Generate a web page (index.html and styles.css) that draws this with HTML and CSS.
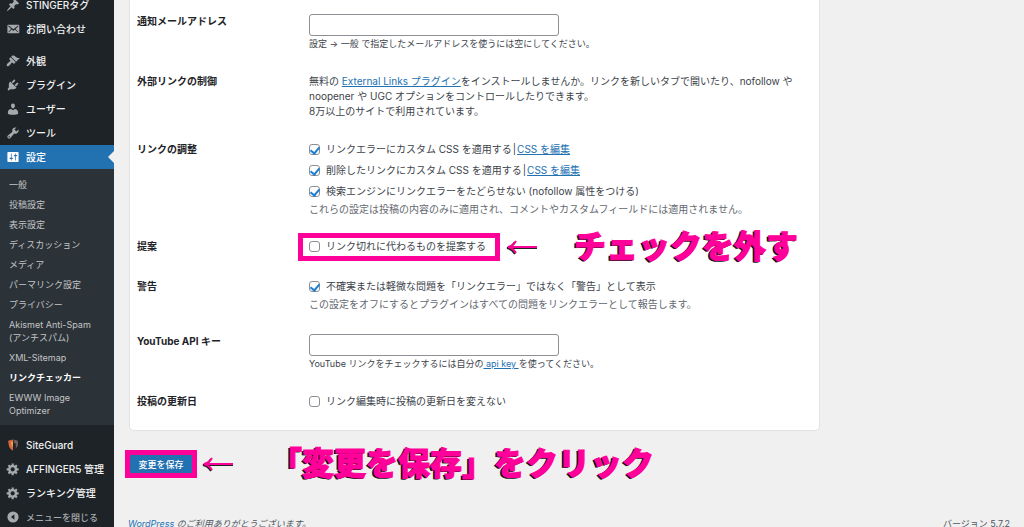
FILE: index.html
```html
<!DOCTYPE html>
<html lang="ja">
<head>
  <meta charset="UTF-8" />
  <meta name="viewport" content="width=device-width, initial-scale=1.0"/>
  <title>リンクチェッカー設定</title>
  <link rel="stylesheet" href="styles.css">
</head>
<body>

  <nav class="sidebar">
    <ul class="menu">
      <li><a href="#"><svg class="icon" viewBox="0 0 20 20"><path d="M10.44 3.02l1.82-1.82 6.36 6.35-1.83 1.82c-1.05-.68-2.48-.57-3.41.36l-.75.75c-.92.93-1.04 2.35-.35 3.41l-1.83 1.82-2.41-2.41-2.8 2.79c-.42.42-3.38 2.71-3.8 2.29s1.86-3.39 2.28-3.81l2.79-2.79L4.1 9.36l1.83-1.82c1.05.69 2.48.57 3.4-.36l.75-.75c.93-.92 1.05-2.35.36-3.41z"/></svg>STINGERタグ</a></li>
      <li><a href="#"><svg class="icon" viewBox="0 0 20 20"><path d="M19 14.5v-9c0-.83-.67-1.5-1.5-1.5H3.49c-.83 0-1.5.67-1.5 1.5v9c0 .83.67 1.5 1.5 1.5H17.5c.83 0 1.5-.67 1.5-1.5zm-1.31-9.11c.33.33.15.67-.03.84L13.6 9.95l3.9 4.06c.12.14.2.36.06.51-.13.16-.43.15-.56.05l-4.37-3.73-2.14 1.95-2.13-1.95-4.37 3.73c-.13.1-.43.11-.56-.05-.14-.15-.06-.37.06-.51l3.9-4.06-4.06-3.72c-.18-.17-.36-.51-.03-.84s.67-.17.95.07l6.24 5.04 6.25-5.04c.28-.24.62-.4.95-.07z"/></svg>お問い合わせ</a></li>
      <li class="group"><a href="#"><svg class="icon" viewBox="0 0 20 20"><path d="M14.48 11.06L7.41 3.99l1.5-1.5c.5-.56 2.3-.47 3.51.32 1.21.8 1.43 1.28 2.91 2.1 1.18.64 2.45 1.26 4.45.85zm-.71.71L6.7 4.7 4.93 6.47c-.39.39-.39 1.02 0 1.41l1.06 1.06c.39.39.39 1.03 0 1.42-.6.6-1.43 1.11-2.21 1.69-.35.26-.7.53-1.01.84C1.43 14.23.4 16.08 1.4 17.07c.99 1 2.84-.03 4.18-1.36.31-.31.58-.66.85-1.02.57-.78 1.08-1.61 1.69-2.21.39-.39 1.02-.39 1.41 0l1.06 1.06c.39.39 1.02.39 1.41 0z"/></svg>外観</a></li>
      <li><a href="#"><svg class="icon" viewBox="0 0 20 20"><path d="M13.11 4.36L9.87 7.6 8 5.73l3.24-3.24c.35-.34 1.05-.2 1.56.32.52.51.66 1.21.31 1.55zm-8 1.77l.91-1.12 9.01 9.01-1.19.84c-.71.71-2.63 1.16-3.82 1.16H6.14L4.9 17.26c-.59.59-1.54.59-2.12 0-.59-.58-.59-1.53 0-2.12l1.24-1.24v-3.88c0-1.13.4-3.19 1.09-3.89zm7.26 3.97l3.24-3.24c.34-.35 1.04-.21 1.55.31.52.51.66 1.21.31 1.55l-3.24 3.25z"/></svg>プラグイン</a></li>
      <li><a href="#"><svg class="icon" viewBox="0 0 20 20"><path d="M10 9.25c-2.27 0-2.73-3.44-2.73-3.44C7 4.02 7.82 2 9.97 2c2.16 0 2.98 2.02 2.71 3.81 0 0-.41 3.44-2.68 3.44zm0 2.57L12.72 10c2.39 0 4.52 2.33 4.52 4.53v2.49s-3.65 1.13-7.24 1.13c-3.65 0-7.24-1.13-7.24-1.13v-2.49c0-2.25 1.94-4.48 4.47-4.48z"/></svg>ユーザー</a></li>
      <li><a href="#"><svg class="icon" viewBox="0 0 20 20"><path d="M16.68 9.77c-1.34 1.34-3.3 1.67-4.95.99l-5.41 6.52c-.99.99-2.59.99-3.58 0s-.99-2.59 0-3.57l6.52-5.42c-.68-1.65-.35-3.61.99-4.95 1.28-1.28 3.12-1.62 4.72-1.06l-2.89 2.89 2.82 2.82 2.86-2.87c.53 1.58.18 3.39-1.08 4.65zM3.81 16.21c.4.39 1.04.39 1.43 0 .4-.4.4-1.04 0-1.43-.39-.4-1.03-.4-1.43 0-.39.39-.39 1.03 0 1.43z"/></svg>ツール</a></li>
      <li class="current"><a href="#"><svg class="icon" viewBox="0 0 20 20"><path d="M18 16V4c0-.55-.45-1-1-1H3c-.55 0-1 .45-1 1v12c0 .55.45 1 1 1h14c.55 0 1-.45 1-1zM8 11h1c.55 0 1 .45 1 1s-.45 1-1 1H8v1.5c0 .28-.22.5-.5.5s-.5-.22-.5-.5V13H6c-.55 0-1-.45-1-1s.45-1 1-1h1V5.5c0-.28.22-.5.5-.5s.5.22.5.5V11zm5-2h-1c-.55 0-1-.45-1-1s.45-1 1-1h1V5.5c0-.28.22-.5.5-.5s.5.22.5.5V7h1c.55 0 1 .45 1 1s-.45 1-1 1h-1v5.5c0 .28-.22.5-.5.5s-.5-.22-.5-.5V9z"/></svg>設定</a>
        <ul class="submenu">
          <li><a href="#">一般</a></li>
          <li><a href="#">投稿設定</a></li>
          <li><a href="#">表示設定</a></li>
          <li><a href="#">ディスカッション</a></li>
          <li><a href="#">メディア</a></li>
          <li><a href="#">パーマリンク設定</a></li>
          <li><a href="#">プライバシー</a></li>
          <li><a href="#">Akismet Anti-Spam<br>(アンチスパム)</a></li>
          <li><a href="#">XML-Sitemap</a></li>
          <li><a href="#" class="selected">リンクチェッカー</a></li>
          <li><a href="#">EWWW Image<br>Optimizer</a></li>
        </ul>
      </li>
      <li class="group"><a href="#"><svg class="icon" viewBox="0 0 20 20"><path fill="#d9683a" d="M3 4l7-2v16c-4-2-6-5-6-8z"/><path fill="#6b6260" d="M11 2l6 2v7l-3 4V8l-3-1z"/><path fill="#f0a04b" d="M7 6l3-1v8l-2-2z"/></svg>SiteGuard</a></li>
      <li><a href="#"><svg class="icon" viewBox="0 0 20 20"><path d="M18 12h-2.18c-.17.7-.44 1.35-.81 1.93l1.54 1.54-2.1 2.1-1.54-1.54c-.58.36-1.23.63-1.91.79V19H8v-2.18c-.68-.16-1.33-.43-1.91-.79l-1.54 1.54-2.12-2.12 1.54-1.54c-.36-.58-.63-1.23-.79-1.91H1V9.03h2.17c.16-.7.44-1.35.8-1.94L2.43 5.55l2.1-2.1 1.54 1.54c.58-.37 1.24-.64 1.93-.81V2h3v2.18c.68.16 1.33.43 1.91.79l1.54-1.54 2.12 2.12-1.54 1.54c.36.59.64 1.24.8 1.94H18V12zm-8.5 1.5c1.66 0 3-1.34 3-3s-1.34-3-3-3-3 1.34-3 3 1.34 3 3 3z"/></svg>AFFINGER5 管理</a></li>
      <li><a href="#"><svg class="icon" viewBox="0 0 20 20"><path d="M18 12h-2.18c-.17.7-.44 1.35-.81 1.93l1.54 1.54-2.1 2.1-1.54-1.54c-.58.36-1.23.63-1.91.79V19H8v-2.18c-.68-.16-1.33-.43-1.91-.79l-1.54 1.54-2.12-2.12 1.54-1.54c-.36-.58-.63-1.23-.79-1.91H1V9.03h2.17c.16-.7.44-1.35.8-1.94L2.43 5.55l2.1-2.1 1.54 1.54c.58-.37 1.24-.64 1.93-.81V2h3v2.18c.68.16 1.33.43 1.91.79l1.54-1.54 2.12 2.12-1.54 1.54c.36.59.64 1.24.8 1.94H18V12zm-8.5 1.5c1.66 0 3-1.34 3-3s-1.34-3-3-3-3 1.34-3 3 1.34 3 3 3z"/></svg>ランキング管理</a></li>
      <li><button type="button" class="collapse"><svg class="icon" viewBox="0 0 20 20"><path fill-rule="evenodd" d="M10 2a8 8 0 1 0 0 16 8 8 0 0 0 0-16zM12 6v8l-5-4z"/></svg>メニューを閉じる</button></li>
    </ul>
  </nav>

  <div class="content">
    <form>
      <div class="panel">
        <table class="form-table">
          <tr>
            <th scope="row"><label for="email">通知メールアドレス</label></th>
            <td>
              <input type="text" id="email">
              <p class="small">設定 → 一般 で指定したメールアドレスを使うには空にしてください。</p>
            </td>
          </tr>
          <tr>
            <th scope="row">外部リンクの制御</th>
            <td>
              <p>無料の <a href="#">External Links プラグイン</a>をインストールしませんか。リンクを新しいタブで開いたり、nofollow や noopener や UGC オプションをコントロールしたりできます。<br>8万以上のサイトで利用されています。</p>
            </td>
          </tr>
          <tr>
            <th scope="row">リンクの調整</th>
            <td class="checks">
              <div class="check"><label><input type="checkbox" checked>リンクエラーにカスタム CSS を適用する</label><span class="bar">|</span><a href="#">CSS を編集</a></div>
              <div class="check"><label><input type="checkbox" checked>削除したリンクにカスタム CSS を適用する</label><span class="bar">|</span><a href="#">CSS を編集</a></div>
              <div class="check"><label><input type="checkbox" checked>検索エンジンにリンクエラーをたどらせない (nofollow 属性をつける)</label></div>
              <p class="description">これらの設定は投稿の内容のみに適用され、コメントやカスタムフィールドには適用されません。</p>
            </td>
          </tr>
          <tr>
            <th scope="row">提案</th>
            <td class="checks">
              <div class="check marked">
                <label><input type="checkbox">リンク切れに代わるものを提案する</label>
                <div class="note">
                  <svg class="arrow" viewBox="0 0 32 16"><path class="shade" d="M31 9H2M9 3Q6 8 1 9Q6 10 9 15"/><path d="M31 8H3M10 2Q7 7 2 8Q7 9 10 14"/></svg>
                  <span>チェックを外す</span>
                </div>
              </div>
            </td>
          </tr>
          <tr>
            <th scope="row">警告</th>
            <td class="checks">
              <div class="check"><label><input type="checkbox" checked>不確実または軽微な問題を「リンクエラー」ではなく「警告」として表示</label></div>
              <p class="description">この設定をオフにするとプラグインはすべての問題をリンクエラーとして報告します。</p>
            </td>
          </tr>
          <tr>
            <th scope="row"><label for="apikey">YouTube API キー</label></th>
            <td>
              <input type="text" id="apikey">
              <p class="small">YouTube リンクをチェックするには自分の<a href="#"> api key </a>を使ってください。</p>
            </td>
          </tr>
          <tr>
            <th scope="row">投稿の更新日</th>
            <td class="checks">
              <div class="check"><label><input type="checkbox">リンク編集時に投稿の更新日を変えない</label></div>
            </td>
          </tr>
        </table>
      </div>

      <div class="submit">
        <button type="submit" class="save">変更を保存</button>
        <div class="note">
          <svg class="arrow" viewBox="0 0 32 16"><path class="shade" d="M31 9H2M9 3Q6 8 1 9Q6 10 9 15"/><path d="M31 8H3M10 2Q7 7 2 8Q7 9 10 14"/></svg>
          <span>「変更を保存」をクリック</span>
        </div>
      </div>
    </form>

    <footer class="footer">
      <em><a href="#">WordPress</a> のご利用ありがとうございます。</em>
      <span>バージョン 5.7.2</span>
    </footer>
  </div>

</body>
</html>
```
FILE: styles.css
```css
* {
  box-sizing: border-box;
}

body {
  margin: 0;
  height: 100vh;
  overflow: hidden;
  display: flex;
  background: #f0f0f1;
  color: #3c434a;
  font-family: Inter, "Noto Sans CJK JP", sans-serif;
  font-size: 10px;
  line-height: 15px;
}

ul {
  list-style: none;
  margin: 0;
  padding: 0;
}

p {
  margin: 0;
}

a {
  color: #2271b1;
}

/* sidebar */
.sidebar {
  flex: none;
  width: 114px;
  background: #1d2327;
}

.menu {
  margin-top: -7px;
}

.menu > li > a,
.collapse {
  display: flex;
  align-items: center;
  gap: 6px;
  width: 100%;
  height: 24px;
  padding: 0 6px;
  color: #f0f0f1;
  font-weight: 500;
  text-decoration: none;
  white-space: nowrap;
}

.collapse {
  border: none;
  background: none;
  color: #a7aaad;
  font-family: inherit;
  font-size: 9px;
  cursor: pointer;
}

.icon {
  flex: none;
  width: 14px;
  height: 14px;
  fill: #a7aaad;
}

.menu > .group {
  margin-top: 8px;
}

.menu > .current > a {
  position: relative;
  background: #2271b1;
  color: #fff;
}

.current > a .icon {
  fill: #fff;
}

.current > a::after {
  content: "";
  position: absolute;
  right: 0;
  top: 6px;
  border: 6px solid transparent;
  border-left: none;
  border-right-color: #f0f0f1;
}

.submenu {
  padding: 5px 0;
  background: #2c3338;
}

.submenu a {
  display: block;
  padding: 4px 9px 3px;
  color: #c3c4c7;
  font-size: 9px;
  line-height: 13px;
  text-decoration: none;
  white-space: nowrap;
}

.submenu .selected {
  color: #fff;
  font-weight: 700;
}

/* settings form */
.content {
  flex: 1;
  min-width: 0;
  padding: 0 14px;
}

.panel {
  max-width: 691px;
  margin-left: 1px;
  padding: 0 8px 10px 7px;
  background: #fff;
  border: 1px solid #e2e3e5;
  border-top: none;
  border-radius: 0 0 5px 5px;
}

.form-table {
  width: 100%;
  border-collapse: collapse;
}

.form-table th {
  width: 172px;
  padding: 14px 0 9px;
  color: #1d2327;
  font-weight: 700;
  text-align: left;
  vertical-align: top;
}

.form-table td {
  padding: 14px 0 9px;
  vertical-align: top;
}

.form-table td.checks {
  padding: 11px 0 8px;
}

input[type="text"] {
  display: block;
  width: 250px;
  max-width: 100%;
  height: 22px;
  border: 1px solid #8c8f94;
  border-radius: 3px;
  background: #fff;
}

.small {
  font-size: 9px;
}

.description {
  color: #646970;
}

.check {
  display: flex;
  align-items: center;
  height: 21px;
}

.check label {
  display: flex;
  align-items: center;
  gap: 6px;
}

.bar {
  padding: 0 1px;
}

input[type="checkbox"] {
  appearance: none;
  display: flex;
  justify-content: center;
  width: 11px;
  height: 11px;
  margin: 0;
  border: 1px solid #8c8f94;
  border-radius: 3px;
  background: #fff;
}

input[type="checkbox"]:checked::before {
  content: "";
  width: 4px;
  height: 7px;
  border: solid #1f7fd0;
  border-width: 0 2px 2px 0;
  transform: rotate(40deg);
}

.marked {
  position: relative;
  width: 177px;
  white-space: nowrap;
}

.marked::after {
  content: "";
  position: absolute;
  inset: -3px -14px -4px -11px;
  border: 5px solid #ff0099;
}

/* pink notes */
.note {
  display: flex;
  align-items: center;
  gap: 36px;
  color: #ff0099;
  font-size: 32px;
  font-weight: 900;
  line-height: 40px;
  -webkit-text-stroke: 1px #ff0099;
  text-shadow: -1px 1px #111, -2px 1px #111;
  white-space: nowrap;
}

.marked .note {
  position: absolute;
  left: 100%;
  margin-left: 20px;
}

.arrow {
  width: 32px;
  height: 16px;
  fill: none;
  stroke: #ff0099;
  stroke-width: 2;
}

.arrow .shade {
  stroke: #222;
}

.submit {
  display: flex;
  align-items: center;
  gap: 10px;
  padding: 13px 0 0 2px;
}

.save {
  width: 62px;
  height: 18px;
  padding: 0;
  border: none;
  outline: 5px solid #ff0099;
  background: #2271b1;
  color: #fff;
  font-family: inherit;
  font-size: 9px;
  font-weight: 500;
  cursor: pointer;
}

.footer {
  display: flex;
  justify-content: space-between;
  padding-top: 32px;
  font-size: 9px;
  color: #50575e;
}

.footer a {
  text-decoration: none;
}
```
